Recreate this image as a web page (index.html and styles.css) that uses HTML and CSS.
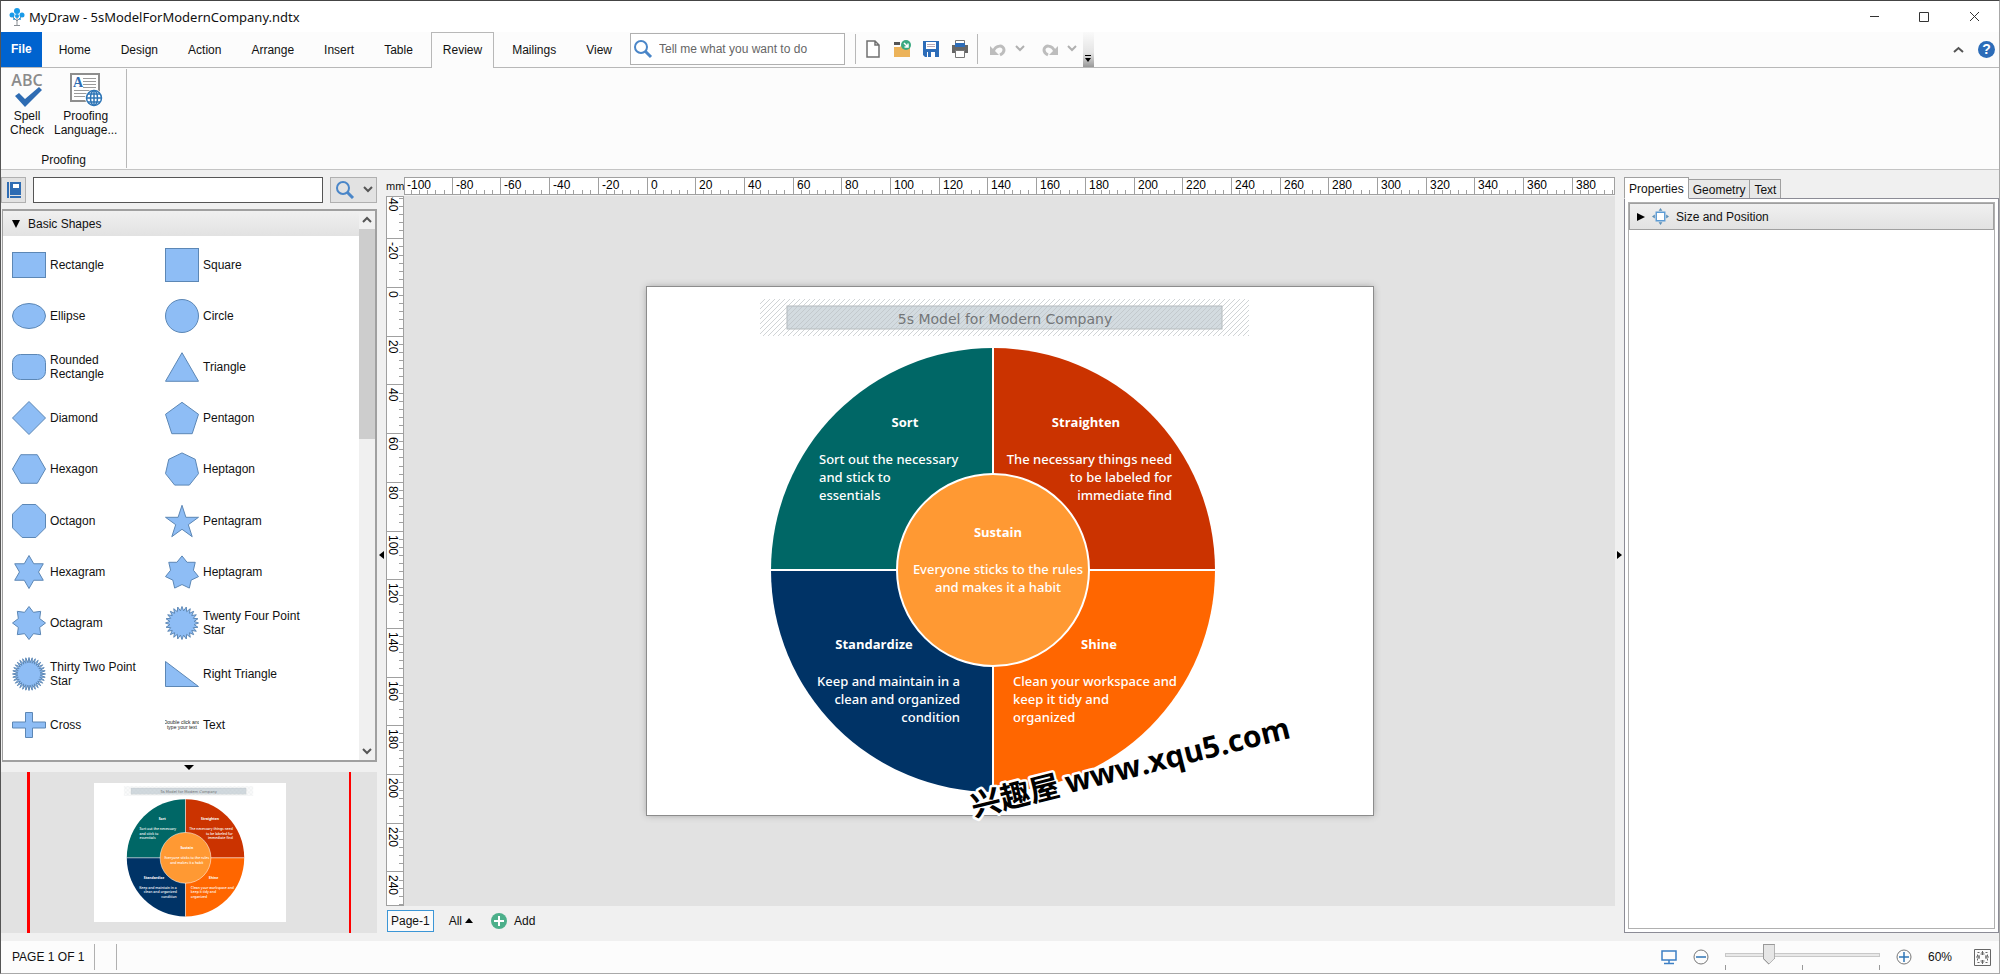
FILE: index.html
```html
<!DOCTYPE html>
<html lang="en">
<head>
	<meta charset="utf-8">
	<title>MyDraw - 5sModelForModernCompany.ndtx</title>
	<link rel="stylesheet" href="styles.css">
</head>
<body>
	<header class="titlebar">
		<svg class="logo" width="16" height="18" viewBox="0 0 16 18">
			<path d="M8 17V8M8 13L4 9M8 13L12 9M5 17.500h6" stroke="#8a8f94" fill="none"/>
			<g fill="#1a9be8">
				<circle cx="8" cy="3" r="3"/>
				<circle cx="3" cy="7" r="2.500"/>
				<circle cx="13" cy="7" r="2.500"/>
				<circle cx="8" cy="8" r="2"/>
				<circle cx="5" cy="11" r="1"/>
				<circle cx="11" cy="11" r="1"/>
			</g>
		</svg>
		<h1>MyDraw - 5sModelForModernCompany.ndtx</h1>
		<div class="window-buttons">
			<button aria-label="Minimize"><svg width="11" height="11" viewBox="0 0 11 11"><path d="M1 5.500h9"/></svg></button>
			<button aria-label="Maximize"><svg width="11" height="11" viewBox="0 0 11 11"><path d="M.5 1.500h9v9h-9z"/></svg></button>
			<button aria-label="Close"><svg width="11" height="11" viewBox="0 0 11 11"><path d="M1 1l9 9M10 1l-9 9"/></svg></button>
		</div>
	</header>

	<nav class="tabs">
		<button class="file">File</button>
		<button>Home</button>
		<button>Design</button>
		<button>Action</button>
		<button>Arrange</button>
		<button>Insert</button>
		<button>Table</button>
		<button class="active">Review</button>
		<button>Mailings</button>
		<button>View</button>
		<label class="tell-me">
			<svg width="20" height="20" viewBox="0 0 20 20" fill="none" stroke="#4a86c8" stroke-width="2"><circle cx="8" cy="8" r="6"/><path d="M12 12l6 6" stroke-width="3"/></svg>
			<input type="text" placeholder="Tell me what you want to do" aria-label="Tell me what you want to do">
		</label>
		<div class="quick">
			<button aria-label="New"><svg width="18" height="20" viewBox="0 0 18 20" fill="#fff" stroke="#707070" stroke-width="1.500"><path d="M3 2h8l4 4v12H3zM11 2v4h4"/></svg></button>
			<button aria-label="Open"><svg width="18" height="20" viewBox="0 0 18 20"><path d="M1 3h6v3H1z" fill="#555"/><path d="M1 8h6l2-2h8v12H1z" fill="#ecb35a"/><circle cx="13" cy="6" r="5" fill="#3aa981"/><path d="M11 4l4 4M15 4.500V8h-3.500" stroke="#fff" stroke-width="1.500" fill="none"/></svg></button>
			<button aria-label="Save"><svg width="18" height="20" viewBox="0 0 18 20"><path d="M1 2h16v16H3l-2-2z" fill="#2c6cb8"/><path d="M4 3h10v7H4zM5 13h8v5H5z" fill="#fff"/><path d="M5 5.500h8M5 7.500h8" stroke="#b9a9b5"/><path d="M6 13h3v5H6z" fill="#2c6cb8"/></svg></button>
			<button aria-label="Print"><svg width="18" height="20" viewBox="0 0 18 20"><path d="M4.500 1.500h9V6h-9z" fill="#fff" stroke="#777"/><path d="M1 6h16v8H1z" fill="#666"/><path d="M4 4h10v4H4z" fill="#2c6cb8"/><path d="M4.500 11.500h9v7h-9z" fill="#fff" stroke="#777"/></svg></button>
		</div>
		<div class="quick history">
			<button aria-label="Undo"><svg width="18" height="16" viewBox="0 0 18 16"><path d="M4 11C7 3 15 4 15 9c0 3-2 4-4 5" fill="none" stroke="#bdbdbd" stroke-width="3"/><path d="M1 5v9h9z" fill="#bdbdbd"/></svg></button>
			<button aria-label="Undo list"><svg width="10" height="8" viewBox="0 0 10 8"><path d="M1 1l4 4 4-4" fill="none" stroke="#b0b0b0" stroke-width="2"/></svg></button>
			<button aria-label="Redo"><svg width="18" height="16" viewBox="0 0 18 16"><path d="M14 11C11 3 3 4 3 9c0 3 2 4 4 5" fill="none" stroke="#bdbdbd" stroke-width="3"/><path d="M17 5v9H8z" fill="#bdbdbd"/></svg></button>
			<button aria-label="Redo list"><svg width="10" height="8" viewBox="0 0 10 8"><path d="M1 1l4 4 4-4" fill="none" stroke="#b0b0b0" stroke-width="2"/></svg></button>
		</div>
		<button class="more" aria-label="Customize"><svg width="8" height="8" viewBox="0 0 8 8"><path d="M1 0h6v1H1zM1 3h6L4 7z"/></svg></button>
		<div class="help">
			<button aria-label="Collapse ribbon"><svg width="11" height="8" viewBox="0 0 11 8"><path d="M1 6l4.500-4L10 6" fill="none" stroke="#555" stroke-width="2"/></svg></button>
			<button class="round" aria-label="Help">?</button>
		</div>
	</nav>

	<section class="ribbon">
		<div class="group">
			<div class="tools">
				<button>
					<svg width="34" height="36" viewBox="0 0 34 36"><text class="abc" x="17" y="15" text-anchor="middle">ABC</text><path d="M5 25l4-3 6 6L29 16l3 3-17 17z" fill="#2e6cb3"/></svg>
					Spell<br>Check
				</button>
				<button>
					<svg width="34" height="36" viewBox="0 0 34 36">
						<path d="M2 3h28v27H2z" fill="#fff" stroke="#8e8e8e" stroke-width="2"/>
						<path d="M14 7.500h13M14 10.500h13M14 13.500h13M14 16.500h13M5 19.500h22M5 22.500h22M5 25.500h14" stroke="#9b9b9b"/>
						<text class="letter" x="4" y="16">A</text>
						<circle cx="25" cy="27" r="9" fill="#fff"/>
						<g fill="none" stroke="#2e75b6" stroke-width="1.500"><circle cx="25" cy="27" r="7.500"/><ellipse cx="25" cy="27" rx="3.500" ry="7.500"/><path d="M25 19v16M17 27h16M19 23h12M19 31h12"/></g>
					</svg>
					Proofing<br>Language...
				</button>
			</div>
			<div class="group-name">Proofing</div>
		</div>
	</section>

	<main>
		<aside class="library">
			<div class="finder">
				<button class="book" aria-label="Libraries"><svg width="16" height="18" viewBox="0 0 16 18"><path d="M1 1h2v16H1zM4 1h11v13H4zM4 15h11v2H4z" fill="#2e6cb3"/><path d="M7 3h6v4H7z" fill="#fff"/></svg></button>
				<input type="text" aria-label="Find shape">
				<button class="find" aria-label="Find">
					<svg width="20" height="18" viewBox="0 0 20 18" fill="none" stroke="#4a86c8" stroke-width="2"><circle cx="8" cy="7" r="6"/><path d="M12 11l6 6" stroke-width="3"/></svg>
					<svg width="10" height="8" viewBox="0 0 10 8"><path d="M1 1l4 4 4-4" fill="none" stroke="#555" stroke-width="2"/></svg>
				</button>
			</div>
			<div class="shapes">
				<div class="shape-list">
					<button class="section"><svg width="8" height="8" viewBox="0 0 8 8"><path d="M0 0h8L4 8z"/></svg>Basic Shapes</button>
					<div class="palette" id="palette"></div>
				</div>
				<div class="scrollbar">
					<svg width="16" height="18" viewBox="0 0 16 18"><path d="M4 11l4-4 4 4" fill="none" stroke="#555" stroke-width="2"/></svg>
					<div class="track"><div class="thumb"></div></div>
					<svg width="16" height="18" viewBox="0 0 16 18"><path d="M4 7l4 4 4-4" fill="none" stroke="#555" stroke-width="2"/></svg>
				</div>
			</div>
			<button class="fold" aria-label="Collapse preview"><svg width="10" height="5" viewBox="0 0 10 5"><path d="M0 0h10L5 5z"/></svg></button>
			<div class="preview">
				<div class="view-frame">
					<svg class="mini" viewBox="0 0 726 528"><use href="#drawing"/></svg>
				</div>
			</div>
		</aside>

		<button class="splitter" aria-label="Collapse library"><svg width="5" height="8" viewBox="0 0 5 8"><path d="M5 0v8L0 4z"/></svg></button>

		<section class="editor">
			<div class="unit">mm</div>
			<svg class="ruler-h" id="rulerH"></svg>
			<svg class="ruler-v" id="rulerV"></svg>
			<div class="canvas">
				<svg class="page" width="726" height="528" viewBox="0 0 726 528">
					<defs>
						<pattern id="hatch" width="5" height="5" patternUnits="userSpaceOnUse">
							<path d="M-1 6L6-1M-1 1L1-1M4 6L6 4" stroke="#bcc2c5" stroke-opacity=".7" stroke-width="1"/>
						</pattern>
						<g id="drawing">
							<rect x="140" y="19" width="435" height="23" fill="#d3dbe0" stroke="#b4babd"/>
							<rect x="113" y="12" width="489" height="37" fill="url(#hatch)"/>
							<text class="doc-title" x="358" y="37">5s Model for Modern Company</text>
							<path d="M346 283V61A222 222 0 0 0 124 283z" fill="#006766"/>
							<path d="M346 283V61A222 222 0 0 1 568 283z" fill="#cb3300"/>
							<path d="M346 283H124A222 222 0 0 0 346 505z" fill="#003366"/>
							<path d="M346 283H568A222 222 0 0 1 346 505z" fill="#ff6600"/>
							<path d="M124 283H568M346 61V505" stroke="#fff" stroke-width="2"/>
							<circle cx="346" cy="283" r="96" fill="#ff9933" stroke="#fff" stroke-width="2"/>
							<g class="middle">
								<text class="head" x="258" y="140">Sort</text>
								<text class="head" x="439" y="140">Straighten</text>
								<text class="head" x="351" y="250">Sustain</text>
								<text class="head" x="227" y="362">Standardize</text>
								<text class="head" x="452" y="362">Shine</text>
								<text x="351" y="287">Everyone sticks to the rules</text>
								<text x="351" y="305">and makes it a habit</text>
							</g>
							<g class="start">
								<text x="172" y="177">Sort out the necessary</text>
								<text x="172" y="195">and stick to</text>
								<text x="172" y="213">essentials</text>
								<text x="366" y="399">Clean your workspace and</text>
								<text x="366" y="417">keep it tidy and</text>
								<text x="366" y="435">organized</text>
							</g>
							<g class="end">
								<text x="525" y="177">The necessary things need</text>
								<text x="525" y="195">to be labeled for</text>
								<text x="525" y="213">immediate find</text>
								<text x="313" y="399">Keep and maintain in a</text>
								<text x="313" y="417">clean and organized</text>
								<text x="313" y="435">condition</text>
							</g>
						</g>
					</defs>
					<use href="#drawing"/>
					<text class="stamp" transform="translate(327 530) rotate(-14)">兴趣屋 <tspan class="site">www.xqu5.com</tspan></text>
				</svg>
			</div>
			<div class="pages">
				<button class="current">Page-1</button>
				<button class="all">All <svg width="8" height="5" viewBox="0 0 8 5"><path d="M0 5h8L4 0z"/></svg></button>
				<button class="add"><svg width="18" height="18" viewBox="0 0 18 18"><circle cx="9" cy="9" r="8" fill="#4caf8a"/><path d="M9 4v10M4 9h10" stroke="#fff" stroke-width="2"/></svg>Add</button>
			</div>
		</section>

		<button class="splitter" aria-label="Collapse properties"><svg width="5" height="8" viewBox="0 0 5 8"><path d="M0 0v8l5-4z"/></svg></button>

		<aside class="properties">
			<div class="side-tabs">
				<button class="active">Properties</button>
				<button>Geometry</button>
				<button>Text</button>
			</div>
			<div class="side-frame">
				<div class="side-list">
					<button class="section">
						<svg width="8" height="8" viewBox="0 0 8 8"><path d="M0 0v8l8-4z"/></svg>
						<svg width="17" height="17" viewBox="0 0 18 18"><path d="M4.500 4.500h9v9h-9z" fill="#fff" stroke="#5b9bd5" stroke-width="1.500"/><path d="M7 3l2-3 2 3zM7 15l2 3 2-3zM3 7v4L0 9zM15 7v4l3-2z" fill="#5a8fb8"/></svg>
						Size and Position
					</button>
				</div>
			</div>
		</aside>
	</main>

	<footer class="status">
		<div class="count">PAGE 1 OF 1</div>
		<div class="cell"></div>
		<div class="zoom">
			<button aria-label="Presentation"><svg width="16" height="16" viewBox="0 0 16 16" fill="none" stroke="#3d7fc4" stroke-width="1.500"><path d="M1 2h14v9H1zM8 11v3M3 14.500h10"/></svg></button>
			<button aria-label="Zoom out"><svg width="16" height="16" viewBox="0 0 16 16" fill="none" stroke="#777"><circle cx="8" cy="8" r="7"/><path d="M3 8h10" stroke="#2e75b6" stroke-width="1.500"/></svg></button>
			<div class="slider">
				<input type="range" min="0" max="100" value="26" aria-label="Zoom">
				<div class="ticks"><i></i><i></i><i></i></div>
			</div>
			<button aria-label="Zoom in"><svg width="16" height="16" viewBox="0 0 16 16" fill="none" stroke="#777"><circle cx="8" cy="8" r="7"/><path d="M3 8h10M8 3v10" stroke="#2e75b6" stroke-width="1.500"/></svg></button>
			<span class="percent">60%</span>
			<button aria-label="Fit page"><svg width="18" height="18" viewBox="0 0 18 18" fill="none" stroke="#666"><path d="M.5 1.500h16v16H.5z"/><path d="M3.500 4.500h10v10h-10z" stroke-dasharray="2 2"/><path d="M2 9h4M5 7v4M15 9h-4M12 7v4M8.500 3v4M6.500 6h4M8.500 16v-4M6.500 13h4"/></svg></button>
		</div>
	</footer>

	<script src="script.js"></script>
</body>
</html>
```

FILE: styles.css
```css
* {
	box-sizing: border-box;
}

body {
	display: flex;
	flex-direction: column;
	min-height: 100vh;
	margin: 0;
	border: 1px solid #a8a8a8;
	border-top-color: #444;
	border-left-color: #555;
	background-color: #f0f0f0;
	color: #111;
	font-family: "Liberation Sans", Arial, sans-serif;
	font-size: 12px;
}

button {
	padding: 0;
	border: none;
	background: none;
	color: inherit;
	font: inherit;
}

input {
	font: inherit;
}

svg {
	display: block;
	flex: none;
}

/* title bar */
.titlebar {
	display: flex;
	align-items: center;
	height: 31px;
	padding-left: 8px;
	background-color: white;
}

.titlebar h1 {
	flex: 1;
	margin: 0 0 0 4px;
	font-family: "Noto Sans", "Open Sans", sans-serif;
	font-size: 13px;
	font-weight: normal;
}

.window-buttons {
	display: flex;
}

.window-buttons button {
	display: flex;
	justify-content: center;
	width: 50px;
}

.window-buttons svg {
	fill: none;
	stroke: #333;
}

/* ribbon tabs */
.tabs {
	display: flex;
	gap: 6px;
	height: 36px;
	border-bottom: 1px solid #b8b8b8;
	background-color: #fcfcfc;
}

.tabs > button {
	height: 36px;
	padding: 0 11px 2px;
	border: 1px solid transparent;
	border-bottom: none;
}

.tabs > .file {
	height: 35px;
	margin-right: -1px;
	padding: 0 9px 2px;
	background-color: #0063cf;
	color: white;
	font-weight: bold;
}

.tabs > .active {
	border-color: #b8b8b8;
	background-color: #fcfcfc;
}

.tell-me {
	display: flex;
	align-items: center;
	gap: 6px;
	width: 215px;
	height: 32px;
	margin: 1px 4px 0 0;
	padding: 0 2px;
	border: 1px solid #b0b0b0;
	background-color: white;
}

.tell-me input {
	flex: 1;
	min-width: 0;
	padding: 0;
	border: none;
}

.tell-me input::placeholder {
	color: #666;
}

.quick {
	display: flex;
	align-items: center;
	gap: 11px;
	height: 30px;
	margin-top: 2px;
	padding: 0 2px 0 8px;
	border-left: 1px solid #b8b8b8;
}

.history {
	gap: 8px;
	padding: 0 0 0 11px;
}

.history button:nth-child(2) {
	margin-right: 8px;
}

.tabs > .more {
	display: flex;
	align-items: flex-end;
	width: 11px;
	height: 35px;
	padding: 0 1px 4px;
	border: none;
	background: linear-gradient(#fafafa, #e4e4e4 60%, #999);
}

.help {
	display: flex;
	align-items: center;
	gap: 14px;
	margin-left: auto;
	padding-right: 4px;
}

.help .round {
	width: 17px;
	height: 17px;
	border-radius: 50%;
	background-color: #2c6cb8;
	color: white;
	font-size: 14px;
	font-weight: bold;
	line-height: 17px;
}

/* ribbon */
.ribbon {
	height: 102px;
	padding: 1px 0;
	border-bottom: 1px solid #c4c4c4;
	background-color: #fcfcfc;
}

.group {
	display: flex;
	flex-direction: column;
	width: 126px;
	height: 100%;
	border-right: 1px solid #b8b8b8;
}

.tools {
	display: flex;
	flex: 1;
	gap: 10px;
	padding: 2px 7px 0 9px;
}

.tools button {
	display: flex;
	flex-direction: column;
	align-items: center;
	line-height: 14px;
}

.tools svg {
	margin-bottom: 2px;
	overflow: visible;
}

.abc {
	fill: #8b8b8b;
	font-family: "Open Sans", sans-serif;
	font-size: 16px;
	font-weight: 600;
}

.letter {
	fill: #2e6cb3;
	font-family: "Liberation Serif", serif;
	font-size: 14px;
	font-weight: bold;
}

.group-name {
	line-height: 16px;
	text-align: center;
}

/* work area */
main {
	display: flex;
	flex: 1;
	padding-top: 7px;
}

.library {
	display: flex;
	flex-direction: column;
	width: 376px;
	padding-bottom: 8px;
}

.finder {
	display: flex;
	gap: 7px;
	height: 26px;
	margin-bottom: 6px;
}

.finder button {
	display: flex;
	align-items: center;
	justify-content: center;
	border: 1px solid #b0b0b0;
	background-color: #e2e2e2;
}

.finder .book {
	width: 25px;
}

.finder input {
	flex: 1;
	min-width: 0;
	border: 1px solid #555;
	background-color: white;
}

.finder .find {
	gap: 8px;
	width: 47px;
}

.shapes {
	display: flex;
	flex: 1;
	border: 2px solid #a0a0a0;
	border-left-width: 1px;
	margin-left: 1px;
	background-color: white;
}

.shape-list {
	display: flex;
	flex: 1;
	flex-direction: column;
	padding-bottom: 9px;
}

.section {
	display: flex;
	align-items: center;
	gap: 8px;
	height: 25px;
	padding-left: 9px;
	background: linear-gradient(#f0f0f0, #e2e2e2);
}

.palette {
	display: grid;
	flex: 1;
	grid-template-columns: 153px 153px;
	grid-auto-rows: 1fr;
	padding: 3px 0 0 9px;
}

.shape {
	display: flex;
	align-items: center;
	gap: 4px;
	padding-right: 12px;
	line-height: 14px;
	text-align: left;
}

.shape svg {
	fill: #8ebdf5;
	stroke: #5c87b5;
}

.shape text {
	fill: #222;
	stroke: none;
	font-size: 5px;
	text-anchor: middle;
}

.scrollbar {
	display: flex;
	flex-direction: column;
	width: 16px;
	background-color: #f0f0f0;
}

.track {
	flex: 1;
}

.thumb {
	height: 41%;
	background-color: #cdcdcd;
}

.fold {
	display: flex;
	align-items: center;
	justify-content: center;
	height: 10px;
}

.preview {
	height: 161px;
	padding: 0 26px;
	background-color: #e2e2e2;
}

.view-frame {
	display: flex;
	align-items: center;
	justify-content: center;
	height: 100%;
	border: solid #f00;
	border-width: 0 2px 0 3px;
}

.mini {
	width: 192px;
	background-color: white;
}

.splitter {
	display: flex;
	align-items: center;
	justify-content: center;
	width: 9px;
	padding-bottom: 8px;
}

.editor {
	display: grid;
	flex: 1;
	grid-template-columns: 18px 1fr;
	grid-template-rows: 19px 1fr 35px;
	min-width: 0;
}

.unit {
	font-size: 11px;
	line-height: 19px;
}

.ruler-h {
	width: 100%;
	height: 18px;
	border: 1px solid #a0a0a0;
	background-color: white;
}

.ruler-v {
	width: 18px;
	height: 100%;
	border: 1px solid #a0a0a0;
	background-color: white;
}

.ruler-h path,
.ruler-v path {
	fill: none;
	stroke: #a0a0a0;
}

.canvas {
	display: flex;
	align-items: center;
	justify-content: center;
	background-color: #e2e2e2;
}

.page {
	overflow: visible;
	background-color: white;
	box-shadow: 0 0 0 1px #8c8c8c, 0 0 7px #999;
}

.doc-title {
	fill: #737678;
	font-family: "DejaVu Sans", sans-serif;
	font-size: 14px;
	text-anchor: middle;
}

.start,
.middle,
.end {
	fill: #fff;
	font-family: "Noto Sans", "Open Sans", sans-serif;
	font-size: 13px;
	font-weight: 500;
}

.middle {
	text-anchor: middle;
}

.end {
	text-anchor: end;
}

.head {
	font-family: "Open Sans", "Noto Sans", sans-serif;
	font-weight: bold;
}

.stamp {
	fill: #000;
	stroke: #fff;
	stroke-width: 5px;
	stroke-linejoin: round;
	paint-order: stroke;
	font-family: "Noto Sans CJK SC", sans-serif;
	font-size: 30px;
	font-weight: bold;
}

.site {
	font-family: "Open Sans", "Noto Sans", sans-serif;
}

.pages {
	display: flex;
	grid-column: 1 / -1;
	align-items: center;
	gap: 15px;
	padding: 0 0 6px 1px;
}

.pages button {
	display: flex;
	align-items: center;
	gap: 3px;
}

.pages .current {
	height: 22px;
	padding: 0 3px;
	border: 1px solid #3c96d6;
	background-color: #fafafa;
}

.pages .add {
	gap: 6px;
	margin-left: 2px;
}

/* properties */
.properties {
	display: flex;
	flex-direction: column;
	width: 375px;
	padding-bottom: 8px;
}

.side-tabs {
	display: flex;
	align-items: flex-end;
	height: 22px;
}

.side-tabs button {
	height: 20px;
	padding: 2px 4px 0;
	border: 1px solid #a0a0a0;
	border-left: none;
	background-color: #e8e8e8;
}

.side-tabs .active {
	z-index: 1;
	height: 22px;
	border-bottom-color: white;
	border-left: 1px solid #a0a0a0;
	background-color: white;
}

.side-frame {
	display: flex;
	flex: 1;
	margin-top: -1px;
	padding: 3px;
	border: 1px solid #8c8c96;
	background-color: white;
}

.side-list {
	flex: 1;
	border: 1px solid #b0b0b0;
}

.side-list .section {
	width: 100%;
	height: 27px;
	padding-left: 7px;
	border: 1px solid #a0a0a0;
	gap: 7px;
}

/* status bar */
.status {
	display: flex;
	align-items: center;
	height: 32px;
	background-color: #fcfcfc;
}

.count {
	padding: 0 10px 0 11px;
}

.cell {
	width: 23px;
	height: 26px;
	border: solid #b0b0b0;
	border-width: 0 1px;
}

.zoom {
	display: flex;
	align-items: center;
	gap: 16px;
	margin-left: auto;
	padding-right: 7px;
}

.slider {
	width: 155px;
}

.slider input {
	display: block;
	width: 100%;
	height: 21px;
	margin: 0;
	background: none;
	-webkit-appearance: none;
	appearance: none;
}

.slider input::-webkit-slider-runnable-track {
	height: 4px;
	border: 1px solid #c8c8c8;
	background-color: #e8e8e8;
}

.slider input::-webkit-slider-thumb {
	width: 12px;
	height: 21px;
	margin-top: -10px;
	background:
		linear-gradient(#999, #999) 0 0 / 12px 1px no-repeat,
		linear-gradient(#999, #999) 0 0 / 1px 15px no-repeat,
		linear-gradient(#999, #999) 11px 0 / 1px 15px no-repeat,
		conic-gradient(from -45deg at 50% 19px, #e6e6e6 90deg, #999 0);
	clip-path: polygon(0 0, 100% 0, 100% 15px, 50% 100%, 0 15px);
	-webkit-appearance: none;
}

.ticks {
	display: flex;
	justify-content: space-between;
}

.ticks i {
	width: 1px;
	height: 5px;
	background-color: #999;
}

.percent {
	width: 28px;
	margin-right: 2px;
}
```

FILE: script.js
```js
// shape palette
const BOX = 34;

function star(n, inner, turn) {
	const raw = [];
	const steps = inner ? n * 2 : n;
	for (let i = 0; i < steps; i++) {
		const r = inner && i % 2 ? inner : 1;
		const a = (i / steps) * Math.PI * 2 + (turn || 0);
		raw.push([Math.sin(a) * r, -Math.cos(a) * r]);
	}
	const xs = raw.map(p => p[0]);
	const ys = raw.map(p => p[1]);
	const minX = Math.min(...xs), maxX = Math.max(...xs);
	const minY = Math.min(...ys), maxY = Math.max(...ys);
	const scale = (BOX - 1) / Math.max(maxX - minX, maxY - minY);
	const points = raw.map(p => [
		(BOX / 2 + (p[0] - (minX + maxX) / 2) * scale).toFixed(2),
		(BOX / 2 + (p[1] - (minY + maxY) / 2) * scale).toFixed(2)
	].join(","));
	return `<polygon points="${points.join(" ")}"/>`;
}

const shapes = [
	["Rectangle", '<rect x=".5" y="4.5" width="33" height="25"/>'],
	["Square", '<rect x=".5" y=".5" width="33" height="33"/>'],
	["Ellipse", '<ellipse cx="17" cy="17" rx="16.5" ry="12.5"/>'],
	["Circle", '<circle cx="17" cy="17" r="16.5"/>'],
	["Rounded Rectangle", '<rect x=".5" y="4.5" width="33" height="25" rx="8"/>'],
	["Triangle", star(3)],
	["Diamond", star(4)],
	["Pentagon", star(5)],
	["Hexagon", star(6, 0, Math.PI / 6)],
	["Heptagon", star(7)],
	["Octagon", star(8, 0, Math.PI / 8)],
	["Pentagram", star(5, 0.382)],
	["Hexagram", star(6, 0.577)],
	["Heptagram", star(7, 0.692)],
	["Octagram", star(8, 0.7)],
	["Twenty Four Point Star", star(24, 0.74)],
	["Thirty Two Point Star", star(32, 0.68)],
	["Right Triangle", '<polygon points=".5,4.5 .5,29.5 33.5,29.5"/>'],
	["Cross", '<path d="M13.5 4.500h7v9.500h13v6h-13v9.500h-7v-9.500h-13v-6h13z"/>'],
	["Text", '<text x="17" y="16">Double click and</text><text x="17" y="21">type your text</text>']
];

document.getElementById("palette").innerHTML = shapes.map(([name, shape]) =>
	`<button class="shape"><svg width="${BOX}" height="${BOX}" viewBox="0 0 ${BOX} ${BOX}">${shape}</svg><span>${name}</span></button>`
).join("");

// rulers, the origin is the corner of the centered page
const PX_PER_MM = 48.7 / 20;

function drawRuler(id, pageSize, vertical) {
	const svg = document.getElementById(id);
	const box = svg.getBoundingClientRect();
	const length = vertical ? box.height : box.width;
	const origin = (length - pageSize) / 2;
	const first = Math.ceil(-origin / PX_PER_MM / 20) - 1;
	let path = "";
	let labels = "";
	for (let k = first; origin + k * 20 * PX_PER_MM < length; k++) {
		const start = origin + k * 20 * PX_PER_MM;
		for (let i = 0; i < 6; i++) {
			const p = Math.round(start + i * 20 * PX_PER_MM / 6) - 0.5;
			const from = i ? 12 : 0;
			path += vertical ? `M${from} ${p}H16` : `M${p} ${from}V16`;
		}
		const at = Math.round(start) + 3;
		labels += vertical
			? `<text transform="translate(2 ${at}) rotate(90)">${k * 20}</text>`
			: `<text x="${at}" y="11">${k * 20}</text>`;
	}
	svg.innerHTML = `<path d="${path}"/>${labels}`;
}

function drawRulers() {
	drawRuler("rulerH", 726, false);
	drawRuler("rulerV", 528, true);
}

drawRulers();
window.addEventListener("resize", drawRulers);
```
